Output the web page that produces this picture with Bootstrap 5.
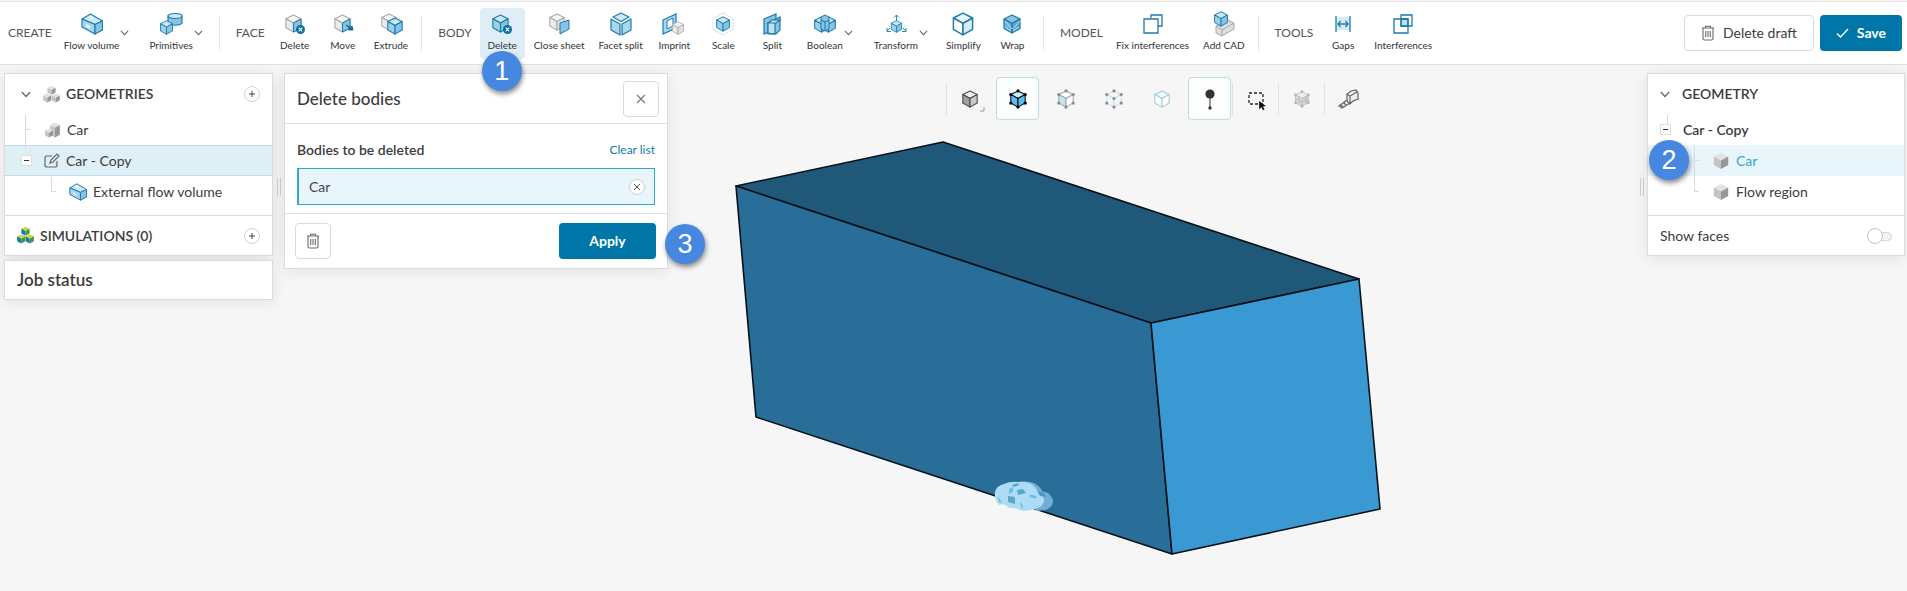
<!DOCTYPE html>
<html lang="en">
<head>
<meta charset="utf-8">
<meta name="viewport" content="width=device-width, initial-scale=1">
<title>CAD editor</title>
<link rel="stylesheet" href="https://cdn.jsdelivr.net/npm/bootstrap@5.3.0/dist/css/bootstrap.min.css">
<script src="https://cdn.jsdelivr.net/npm/bootstrap@5.3.0/dist/js/bootstrap.bundle.min.js"></script>
<style>
  :root { --brand:#0076a8; --cyan:#2fa9cf; --line:#dcdcdc; --ink:#3c3c3c; }
  body { font-family:Lato,sans-serif; font-size:14px; line-height:20px; color:var(--ink); background:#f6f6f6; }
  button { color:inherit; }
  .cube { --t:#c9e7f6; --l:#9bd0ec; --r:#86c3e4; color:#1d7ba8; }
  .gray { --t:#f6f6f6; --l:#ebebeb; --r:#e0e0e0; color:#ababab; }
  .solid { --t:#e2e2e2; --l:#c4c4c4; --r:#979797; color:transparent; }
  .sims { --t:#c3dc3a; --l:#1a75b0; --r:#45963c; color:transparent; }
  .pale { --t:#e9f5fb; --l:#fff; --r:#d7edf8; }
  .wrapped { --t:#86c3e4; --l:#6bb1d8; --r:#5aa7d2; }
  .shaded { --t:#eee; --l:#a0a0a0; --r:#c9c9c9; color:#4a4a4a; }
  .bodies { --t:#c5ecfb; --l:#58c1ee; --r:#58c1ee; color:#111; }
  .faces { --t:#fff; --l:#bfe8f5; --r:#fff; color:#aaa; }
  .edges { --t:#f6f6f6; --l:#f6f6f6; --r:#f6f6f6; color:#c9e3ea; }
  .volumes { --t:#f2fafc; --l:#fff; --r:#fff; color:#9ed0df; }
  .meshed { --t:#eee; --l:#dedede; --r:#d5d5d5; color:#c0c0c0; }

  .ribbon { min-height:64px; border-top:1px solid #e2e2e2; border-bottom:1px solid #dedede; margin-top:1px; }
  .group-name { font-size:12px; color:#555; }
  .tool { border:0; background:none; min-width:44px; height:51px; padding:5px 5px 7px; border-radius:4px; font-size:10px; line-height:14px; text-align:center; color:#333; white-space:nowrap; }
  .tool svg { display:block; width:22px; height:22px; margin:0 auto 3px; overflow:visible; }
  .tool.current { background:#dfeef6; }
  .tool-menu { padding:5px 8px 7px; }
  .tool .chev { width:9px; height:6px; margin:17px 0 0 1px; }
  .body-tools .tool { min-width:45px; }
  .body-tools .tool-menu { padding-right:9px; }
  .divide { width:1px; height:36px; background:#e6e6e6; }
  .chev { width:10px; height:7px; fill:none; stroke:#666; stroke-width:1.2; }
  .ribbon-end { gap:6px; padding-right:5px; }
  .btn { font-size:14px; line-height:20px; height:36px; border-radius:4px; --bs-btn-padding-y:0; }
  .btn-line { background:#fff; border:1px solid #dcdcdc; color:var(--ink); }
  .btn-brand, .btn-brand:hover { background:var(--brand); color:#fff; font-weight:700; }
  .btn-save { --bs-btn-padding-x:15px; }
  .btn-apply { width:97px; }
  .btn-square { width:36px; display:grid; place-items:center; padding:0; }

  .work { padding-right:2px; }
  .side { width:269px; }
  .props { width:384px; }
  .inspect { width:258px; }
  .panel { background:#fff; border:1px solid var(--line); box-shadow:0 2px 14px rgba(0,0,0,.09); }
  .head-row { height:40px; }
  .props-head { height:50px; }
  .props-foot { padding:9px 11px 9px 10px; }
  .leaf { height:31px; }
  .foot-row { height:40px; border-top:1px solid var(--line); }
  .job-row { height:40px; }
  .title-md { font-size:17px; line-height:22px; font-weight:500; margin:0; }
  .job-row .title-md { font-weight:600; }
  .title-sm { font-size:14px; font-weight:600; }
  .icon-gap { margin-right:6px; }
  .chosen { background:#dfeff6; box-shadow:inset 0 1px #bddbe8, inset 0 -1px #bddbe8; }
  .picked { background:#e8f6fc; color:var(--cyan); }
  .fold { width:11px; height:11px; border:1px solid #dedede; background:#fff; padding:0; position:relative; z-index:1; }
  .fold::before { content:""; position:absolute; left:2px; top:4px; width:5px; height:1px; background:#333; }
  .plus { width:16px; height:16px; border:1px solid #d0d0d0; border-radius:50%; background:#fff; padding:0; }
  .plus svg { display:block; margin:auto; }
  .grip { width:11px; padding-top:105px; }
  .grip i { display:block; width:4px; height:18px; border:solid #cfcfcf; border-width:0 1px; margin:0 auto; }
  .twig { position:absolute; border:solid #dadada; border-width:0 0 1px 1px; width:5px; }
  .twig-a { left:20px; top:41px; height:15px; }
  .twig-b { left:20px; top:56px; height:20px; border-bottom:0; }
  .twig-c { left:46px; top:103px; height:15px; }
  .twig-d { left:19px; top:41px; height:9px; border-bottom:0; }
  .twig-e { left:46px; top:73px; height:14px; }
  .twig-f { left:46px; top:87px; height:31px; }
  .pick-box { border:1px solid var(--cyan); border-left-width:2px; background:#e8f6fc; height:37px; padding:0 9px 0 10px; }
  .pick-box input { background:none; border:0; outline:0; color:#444; min-width:0; }
  .step { position:absolute; width:40px; height:40px; border-radius:50%; background:#4688e0; color:#fff; font:27px/40px "Liberation Sans",sans-serif; text-align:center; box-shadow:1px 3px 5px rgba(0,0,0,.45); z-index:5; }
  .step-1 { left:2px; top:43px; }
  .step-2 { left:1px; top:66px; }
  .step-3 { right:-38px; bottom:4px; }
  .scene { position:absolute; inset:0; width:100%; height:100%; }
  .view-bar { padding:4px 0 0 10px; }
  .view-set { gap:5px; }
  .view { width:43px; height:43px; border:1px solid transparent; border-radius:4px; background:none; padding:0; }
  .view.on { background:#fcfdfd; border-color:#bddbe8; }
  .view svg { display:block; margin:auto; width:22px; height:22px; overflow:visible; }
  .view-divide { width:1px; height:32px; background:#e2e2e2; margin:0 1px; }
  .flip { appearance:none; width:25px; height:16px; position:relative; margin:0; background:none; }
  .flip::before { content:""; position:absolute; left:10px; top:4px; width:15px; height:9px; border-radius:5px; background:#f2f2f2; border:1px solid #d5d5d5; }
  .flip::after { content:""; position:absolute; left:0; top:0; width:16px; height:16px; border-radius:50%; background:#fff; border:1px solid #c4c4c4; }
  a.clear { font-size:12px; color:#0d7cae; text-decoration:none; }
</style>
</head>
<body class="min-vh-100 d-flex flex-column">

<svg width="0" height="0" class="position-absolute" aria-hidden="true">
  <symbol id="cube" viewBox="0 0 20 20">
    <g stroke="currentColor" stroke-width="1.2" stroke-linejoin="round">
      <path fill="var(--t)" d="M10 1l8 4-8 4.500L2 5z"/><path fill="var(--l)" d="M2 5l8 4.500V19l-8-4.500z"/><path fill="var(--r)" d="M18 5l-8 4.500V19l8-4.500z"/>
    </g>
  </symbol>
  <symbol id="trio" viewBox="0 0 20 20">
    <use href="#cube" x="4" y="-1" width="12" height="12"/><use href="#cube" x="-1" y="8" width="12" height="12"/><use href="#cube" x="9" y="8" width="12" height="12"/>
  </symbol>
  <symbol id="slab" viewBox="0 0 22 22">
    <g stroke="#1d7ba8" stroke-width="1.200" stroke-linejoin="round">
      <path fill="#cbe8f6" d="M1 6l8.500-5L21.500 8 14 11.500z"/><path fill="#a4d5ee" d="M1 6l13 5.500V21L1 14z"/><path fill="#86c3e4" d="M21.500 8L14 11.500V21l7.500-4z"/>
    </g>
    <path fill="#fff" d="M7 4l3-1.500 3 3-2 1zM5 11l4 2v2.500l-4-2z" opacity=".8"/>
  </symbol>
  <symbol id="chev" viewBox="0 0 10 7"><path d="M.8 1L5 5.500 9.200 1"/></symbol>
  <symbol id="bin" viewBox="0 0 14 16"><path fill="none" stroke="#6a6a6a" stroke-width="1.100" d="M1 3h12M4.500 3V1.200h5V3M2 3v10.500q0 1.500 1.500 1.500h7q1.500 0 1.500-1.500V3M4.700 6v6M7 6v6M9.300 6v6"/></symbol>
  <symbol id="xdot" viewBox="0 0 9 9"><circle cx="4.500" cy="4.500" r="4.500" fill="#0a6fa3"/><path d="M2.700 2.700l3.600 3.600M6.300 2.700L2.700 6.300" stroke="#fff" stroke-width="1.100"/></symbol>
  <symbol id="node" viewBox="0 0 20 20" overflow="visible"><circle cx="10" cy="1" r="1.800"/><circle cx="2" cy="5" r="1.800"/><circle cx="18" cy="5" r="1.800"/><circle cx="2" cy="14.500" r="1.800"/><circle cx="18" cy="14.500" r="1.800"/><circle cx="10" cy="19" r="1.800"/></symbol>
</svg>

<header class="ribbon bg-white d-flex align-items-center justify-content-between flex-shrink-0">
  <nav class="d-flex align-items-center" aria-label="CAD tools">
    <span class="group-name ms-2">CREATE</span>
    <div class="d-flex gap-1 ms-1">
      <button class="tool tool-menu d-flex"><span><svg viewBox="0 0 22 22"><use href="#slab"/></svg>Flow volume</span><svg class="chev"><use href="#chev"/></svg></button>
      <button class="tool tool-menu d-flex"><span><svg viewBox="0 0 22 22"><g stroke="#1d7ba8" stroke-width="1.200"><path fill="#86c3e4" d="M8 3v7c2 3 12 3 14 0V3z"/><ellipse cx="15" cy="3" rx="7" ry="2.500" fill="#cbe8f6"/></g><use class="cube" href="#cube" x="-1" y="7" width="15" height="15"/></svg>Primitives</span><svg class="chev"><use href="#chev"/></svg></button>
    </div>
    <span class="divide ms-2"></span>
    <span class="group-name ms-3">FACE</span>
    <div class="d-flex gap-1 ms-2">
      <button class="tool"><svg viewBox="0 0 22 22"><use class="cube gray" href="#cube" y="1" width="19" height="19"/><path fill="#86c3e4" stroke="#1d7ba8" d="M17 6l-7.500 4v9l7.500-4z"/><use href="#xdot" x="12" y="12" width="9" height="9"/></svg>Delete</button>
      <button class="tool"><svg viewBox="0 0 22 22"><use class="cube gray" href="#cube" x="1" y="1" width="19" height="19"/><path fill="#86c3e4" stroke="#1d7ba8" d="M18 6l-7.500 4v9l7.500-4z"/><path stroke="#0a6fa3" fill="#0a6fa3" d="M14 12l5 2.500 1-1.500 1 4h-4.500l1-1.500z"/></svg>Move</button>
      <button class="tool"><svg viewBox="0 0 22 22"><use class="cube gray" href="#cube" width="18" height="18"/><use class="cube" href="#cube" x="6" y="4" width="18" height="18"/></svg>Extrude</button>
    </div>
    <span class="divide ms-2"></span>
    <span class="group-name ms-3">BODY</span>
    <div class="body-tools d-flex gap-1 ms-2">
      <div class="position-relative">
        <button class="tool current"><svg viewBox="0 0 22 22"><use class="cube" href="#cube" x="0" y="1" width="19" height="19"/><use href="#xdot" x="12" y="12" width="9" height="9"/></svg>Delete</button>
        <span class="step step-1">1</span>
      </div>
      <button class="tool"><svg viewBox="0 0 22 22"><use class="cube gray" href="#cube" width="18" height="18"/><path fill="#86c3e4" stroke="#1d7ba8" d="M12 10l9-3v9l-9 5z"/></svg>Close sheet</button>
      <button class="tool"><svg viewBox="0 0 22 22" fill="#a9d7ee" stroke="#1d7ba8" stroke-width="1.200" stroke-linejoin="round"><path fill="#cbe8f6" d="M11 0l8 4-8 4.500L3 4z"/><path d="M1 6l9 5v11l-9-5zM21 6l-9 5v11l9-5z"/></svg>Facet split</button>
      <button class="tool"><svg viewBox="0 0 22 22"><path fill="#a9d7ee" stroke="#1d7ba8" stroke-width="1.200" d="M0 7l13-6v14L0 21z"/><path fill="#fff" stroke="#1d7ba8" d="M4 8l6-3v8l-6 3z"/><use class="cube gray" href="#cube" x="8" y="8" width="14" height="14"/></svg>Imprint</button>
      <button class="tool"><svg viewBox="0 0 22 22"><path d="M11 0l10 5.500v11L11 22 1 16.500v-11z" fill="none" stroke="#a9cfdf" stroke-width=".8" stroke-dasharray="2 1"/><use class="cube" href="#cube" x="3" y="3" width="16" height="16"/></svg>Scale</button>
      <button class="tool"><svg viewBox="0 0 22 22" stroke="#1d7ba8" stroke-width="1.200" fill="#86c3e4"><path d="M3 6l12-5v15L3 21z"/><path d="M7 10l12-6v13l-4 4H7z"/><path fill="#bfe1f2" d="M7 10l4-3 8 0-4 3zM7 10h7v11l-7-1z"/></svg>Split</button>
      <button class="tool tool-menu d-flex"><span><svg viewBox="0 0 22 22"><use class="cube" href="#cube" x="-1" y="3" width="17" height="17"/><use class="cube" href="#cube" x="6" y="3" width="17" height="17"/><path fill="#86c3e4" stroke="#1d7ba8" d="M11 2l4 2v12l-4 2-4-2V4z"/><path fill="none" stroke="#1d7ba8" d="M7 7l4 2 4-2M11 9v9"/></svg>Boolean</span><svg class="chev"><use href="#chev"/></svg></button>
      <button class="tool tool-menu d-flex"><span><svg viewBox="0 0 22 22"><use class="cube" href="#cube" x="5" y="7" width="13" height="13"/><path fill="none" stroke="#2f86b3" d="M11.500 8V2M9 4.500L11.500 2 14 4.500M5 15l-3 3m0-3v3.500h4M18 15l3 3m0-3v3.500h-4"/></svg>Transform</span><svg class="chev"><use href="#chev"/></svg></button>
      <button class="tool"><svg viewBox="0 0 22 22"><use class="cube pale" href="#cube" x="-1" y="-1" width="24" height="24"/></svg>Simplify</button>
      <button class="tool"><svg viewBox="0 0 22 22"><use class="cube wrapped" href="#cube" x="1" y="1" width="20" height="20"/><path d="M4 8l7 8M19 8l-7 8M4 14l6 4M18 14l-6 4" stroke="#bfe1f2" fill="none"/></svg>Wrap</button>
    </div>
    <span class="divide ms-2"></span>
    <span class="group-name ms-3">MODEL</span>
    <div class="d-flex gap-1 ms-2">
      <button class="tool"><svg viewBox="0 0 22 22" fill="none" stroke="#1d7ba8" stroke-width="1.300"><path d="M9 5V2h11v11h-4"/><path d="M2 6h14v14H2zM12 6h4v4"/></svg>Fix interferences</button>
      <button class="tool"><svg viewBox="0 0 22 22"><path fill="#dedede" stroke="#a9a9a9" d="M3 13l12-6 6 3v6l-12 7-6-3z"/><path fill="none" stroke="#a9a9a9" d="M3 13l6 4 12-7M9 17v6"/><use class="cube" href="#cube" x="0" y="-2" width="16" height="16"/></svg>Add CAD</button>
    </div>
    <span class="divide ms-2"></span>
    <span class="group-name ms-3">TOOLS</span>
    <div class="d-flex gap-1 ms-2">
      <button class="tool"><svg viewBox="0 0 22 22" fill="none" stroke="#1d7ba8" stroke-width="1.300"><path fill="#d5ecf7" stroke="none" d="M4 4h14v13H4z"/><path d="M4 3v16M18 3v16M6 11h10M8.500 8L6 11l2.500 3M13.500 8l2.500 3-2.500 3"/></svg>Gaps</button>
      <button class="tool"><svg viewBox="0 0 22 22" fill="none" stroke="#1d7ba8" stroke-width="1.300"><path fill="#bfe1f2" d="M9 6h7v7H9z"/><path d="M9 2h11v11H9zM2 6h14v14H2z"/></svg>Interferences</button>
    </div>
  </nav>
  <div class="ribbon-end d-flex">
    <button class="btn btn-line d-flex align-items-center gap-2 px-3"><svg width="14" height="16"><use href="#bin"/></svg>Delete draft</button>
    <button class="btn btn-brand btn-save d-flex align-items-center gap-2"><svg width="13" height="10" fill="none" stroke="#fff" stroke-width="1.400"><path d="M1 5.500l3.500 3.500L12 1"/></svg>Save</button>
  </div>
</header>

<main class="work position-relative flex-grow-1 d-flex align-items-start ps-1 pt-2 overflow-hidden">
  <svg class="scene" viewBox="0 65 1907 526" preserveAspectRatio="xMidYMin meet" aria-label="Flow region box">
    <g stroke="#06121a" stroke-width="1.600" stroke-linejoin="round">
      <path fill="#205879" d="M736 186L943 142l416 137-208 44z"/>
      <path fill="#296e98" d="M736 186l415 137 21 231-416-137z"/>
      <path fill="#3a98d3" d="M1151 323l208-44 21 230-208 45z"/>
    </g>
    <path fill="#6fafd6" d="M1014 483q12-3 20 0 6 3 8 8l6 2q5 4 5 9-1 6-8 8l-8 1-16-18z"/>
    <path fill="#acdcf6" d="M995 492q1-6 9-8 6-3 14-2 12-1 17 5l3 5q6 3 6 9-1 5-6 7-8 3-15 3-5-1-8-3l-5 0-7-4-4 1q-5-5-4-13z"/>
    <path fill="#56a8c8" d="M1008 496l7 1v7l-7-2zM1017 490l6-1 3 4-8 2zM1012 485l6-2 1 2-5 2z"/>
    <path fill="#74bbdd" d="M1009 489l4-2v5l-4 2zM998 497q3 2 3 6-3-1-3-6zM1020 502q3 2 3 7-3-2-3-7zM1029 495q6-1 8 3-6 1-8-3z"/>
    <path fill="#4f96c0" d="M1037 491l7 2 2 4-6-1z"/>
  </svg>

  <aside class="side position-relative">
    <div class="panel">
      <div class="position-relative">
        <div class="head-row d-flex align-items-center px-2">
          <svg class="chev ms-2 me-2"><use href="#chev"/></svg>
          <svg class="cube solid ms-1 icon-gap" width="17" height="17"><use href="#trio"/></svg>
          <span class="title-sm flex-grow-1">GEOMETRIES</span>
          <button class="plus me-1" aria-label="Add geometry"><svg width="8" height="8" stroke="#444"><path d="M4 1v6M1 4h6"/></svg></button>
        </div>
        <div class="leaf d-flex align-items-center ps-4"><svg class="cube solid ms-3 icon-gap" width="16" height="16"><use href="#cube" x="4" y="4" width="12" height="12"/><use href="#cube" x="4" y="0" width="12" height="12"/><use href="#cube" x="-1" y="6" width="10" height="10"/></svg>Car</div>
        <div class="leaf chosen d-flex align-items-center ps-3">
          <button class="fold me-2" aria-label="Collapse"></button>
          <svg class="ms-1 icon-gap" width="16" height="16" fill="none" stroke="#666" stroke-width="1.200"><path d="M8 3H3Q1 3 1 5v7q0 2 2 2h8q2 0 2-2V8M6 10l1-3 6-6 2 2-6 6z"/></svg>Car - Copy
        </div>
        <div class="leaf d-flex align-items-center ps-5"><svg class="ms-3 icon-gap" width="18" height="18" viewBox="0 0 22 22"><use href="#slab"/></svg>External flow volume</div>
        <i class="twig twig-a"></i><i class="twig twig-b"></i><i class="twig twig-c"></i>
      </div>
      <div class="foot-row d-flex align-items-center mt-2 px-2">
        <svg class="cube sims ms-1 icon-gap" width="17" height="17"><use href="#trio"/></svg>
        <span class="title-sm flex-grow-1">SIMULATIONS (0)</span>
        <button class="plus me-1" aria-label="Add simulation"><svg width="8" height="8" stroke="#444"><path d="M4 1v6M1 4h6"/></svg></button>
      </div>
    </div>
    <div class="panel job-row d-flex align-items-center mt-1 px-2"><h2 class="title-md ps-1">Job status</h2></div>
  </aside>
  <div class="grip position-relative"><i></i></div>

  <section class="props panel position-relative">
    <div class="props-head d-flex justify-content-between align-items-center px-2 border-bottom">
      <h2 class="title-md ps-1">Delete bodies</h2>
      <button class="btn btn-line btn-square" aria-label="Close"><svg width="10" height="10" stroke="#777" stroke-width="1.200"><path d="M1 1l8 8M9 1L1 9"/></svg></button>
    </div>
    <div class="px-2 pt-3 mx-1">
      <div class="d-flex justify-content-between mb-2"><label for="body" class="title-sm">Bodies to be deleted</label><a class="clear" href="#">Clear list</a></div>
      <div class="pick-box d-flex align-items-center"><input id="body" class="flex-grow-1 p-0" value="Car"><button class="plus" aria-label="Remove"><svg width="8" height="8" stroke="#555"><path d="M1 1l6 6M7 1L1 7"/></svg></button></div>
    </div>
    <div class="props-foot d-flex justify-content-between border-top mt-2">
      <button class="btn btn-line btn-square" aria-label="Discard"><svg width="14" height="16"><use href="#bin"/></svg></button>
      <button class="btn btn-brand btn-apply">Apply</button>
    </div>
    <span class="step step-3">3</span>
  </section>

  <div class="view-bar flex-grow-1 d-flex justify-content-center align-items-center position-relative" role="toolbar" aria-label="View tools">
    <span class="view-divide"></span>
    <div class="view-set d-flex">
      <button class="view" aria-label="Render mode"><svg viewBox="0 0 22 22"><use class="cube shaded" href="#cube" x="2" y="2" width="18" height="18"/><path d="M25 19v4h-4" fill="none" stroke="#999"/></svg></button>
      <button class="view on" aria-label="Pick bodies"><svg viewBox="0 0 22 22"><use class="cube bodies" href="#cube" x="2" y="2" width="18" height="18"/><use href="#node" fill="#000" x="2" y="2" width="18" height="18"/></svg></button>
      <button class="view" aria-label="Pick faces"><svg viewBox="0 0 22 22"><use class="cube faces" href="#cube" x="2" y="2" width="18" height="18"/><use href="#node" fill="#8c8c8c" x="2" y="2" width="18" height="18"/></svg></button>
      <button class="view" aria-label="Pick edges"><svg viewBox="0 0 22 22"><use class="cube edges" href="#cube" x="2" y="2" width="18" height="18"/><use href="#node" fill="#8c8c8c" x="2" y="2" width="18" height="18"/><circle cx="11" cy="10.500" r="1.600" fill="#8c8c8c"/></svg></button>
      <button class="view" aria-label="Pick volumes"><svg viewBox="0 0 22 22"><use class="cube volumes" href="#cube" x="2" y="2" width="18" height="18"/></svg></button>
      <button class="view on" aria-label="Probe"><svg viewBox="0 0 22 22" fill="#333"><circle cx="11" cy="6" r="4.600"/><path d="M10.500 8h1v12h-1z"/><circle cx="11" cy="20" r="1.700"/></svg></button>
    </div>
    <span class="view-divide"></span>
    <button class="view" aria-label="Box select"><svg viewBox="0 0 22 22"><path fill="none" stroke="#222" stroke-width="1.300" stroke-dasharray="3 2" d="M4 5h14v11H4z"/><path fill="#111" d="M14 13l7 5-3 .4 1.500 3-1.500.8-1.500-3-2.300 2z"/></svg></button>
    <span class="view-divide"></span>
    <button class="view" aria-label="Mesh"><svg viewBox="0 0 22 22"><use class="cube meshed" href="#cube" x="3" y="3" width="16" height="16"/><path stroke="#bbb" fill="none" d="M5 11l6 3 7-3M8 8v9M15 8v8"/><use href="#node" fill="#b5b5b5" x="3" y="3" width="16" height="16"/></svg></button>
    <span class="view-divide"></span>
    <button class="view" aria-label="Measure"><svg viewBox="0 0 22 22" fill="none" stroke="#666" stroke-width="1.200"><path fill="#eee" d="M10 13V6l4-3 5-1 2 3v6l-5 2-3 3zM13 16V8l7-4M10 6l3 2M10 12l-8 6 3 2 8-5M4 17l2 2M7 15l2 2"/></svg></button>
  </div>

  <div class="grip position-relative"><i></i></div>
  <aside class="inspect panel position-relative">
    <div class="head-row d-flex align-items-center ps-2"><svg class="chev ms-1 me-2"><use href="#chev"/></svg><span class="title-sm ps-1">GEOMETRY</span></div>
    <div class="leaf d-flex align-items-center ps-2"><button class="fold ms-1 me-2" aria-label="Collapse"></button><span class="title-sm ps-1">Car - Copy</span></div>
    <div class="leaf picked d-flex align-items-center ps-5"><svg class="cube solid ms-3 icon-gap" width="18" height="18"><use href="#cube"/></svg>Car</div>
    <div class="leaf d-flex align-items-center ps-5"><svg class="cube solid ms-3 icon-gap" width="18" height="18"><use href="#cube"/></svg>Flow region</div>
    <i class="twig twig-d"></i><i class="twig twig-e"></i><i class="twig twig-f"></i>
    <div class="foot-row d-flex align-items-center justify-content-between mt-2 px-2"><label class="ps-1" for="faces">Show faces</label><input class="flip me-1" id="faces" type="checkbox" role="switch"></div>
    <span class="step step-2">2</span>
  </aside>
</main>
</body>
</html>
